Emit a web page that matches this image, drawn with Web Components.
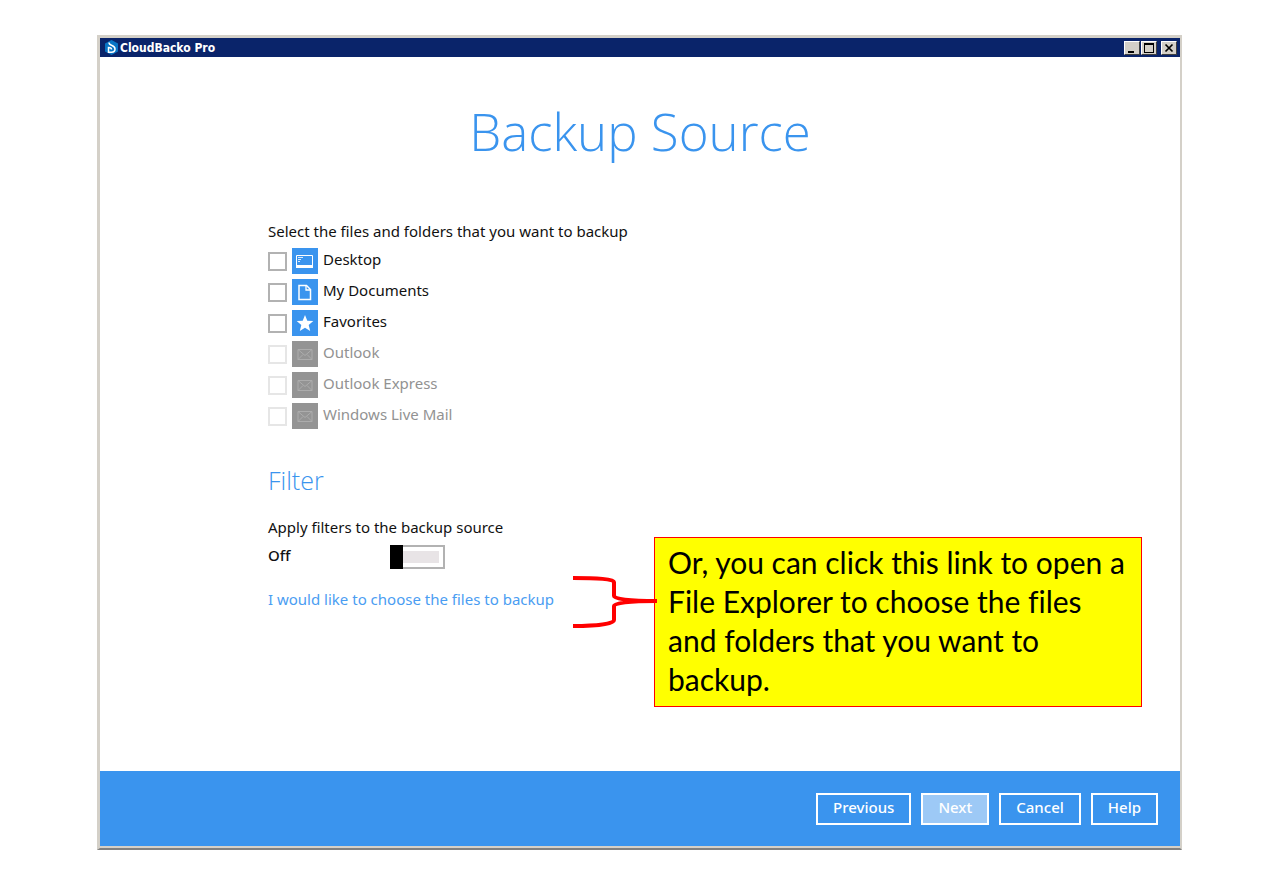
<!DOCTYPE html>
<html lang="en">
<head>
<meta charset="utf-8">
<title>CloudBacko Pro</title>
<style>
body{margin:0;background:#fff;color:#111;font:15px/20px "Noto Sans","Open Sans",sans-serif}
</style>
</head>
<body>
<backup-app></backup-app>
<script>
const define=(name,html,init)=>{
  const t=document.createElement('template');
  t.innerHTML=html;
  customElements.define(name,class extends HTMLElement{
    connectedCallback(){
      if(this.shadowRoot)return;
      const r=this.attachShadow({mode:'open'});
      r.append(t.content.cloneNode(true));
      if(init)init(this,r);
    }
  });
};

const icons={
  desktop:'<path d="M4.500 7.500h16v12h-16z" fill="none" stroke="#fff"/><path d="M4 17h17v3H4z" fill="#fff"/><path d="M6 9.500h5M6 11.500h3M6 13.500h2" stroke="#fff" stroke-opacity=".8"/>',
  document:'<path d="M7 6.500h7.500l4 4v10H7z" fill="none" stroke="#fff" stroke-width="1.500"/><path d="M14 6.500v4.500h4.500" fill="none" stroke="#fff" stroke-width="1.300"/>',
  star:'<path d="M13 5l2.300 5.700 6 .4-4.600 3.900 1.500 6-5.200-3.300L7.800 21l1.500-6L4.700 11.100l6-.4z" fill="#fff"/>',
  mail:'<g fill="none" stroke="#acacac"><path d="M6 8.500h14v10H6z"/><path d="M6 8.500l7 6 7-6M6 18.500l5-5M20 18.500l-5-5"/></g>'
};

define('title-bar',`<style>
:host{display:flex;align-items:center;height:19px;background:#0a246a;color:#fff;padding:0 3px 0 4px}
.logo{width:15px;height:15px;margin-right:1px}
h1{margin:0;flex:1;font:bold 12px/18px "DejaVu Sans Condensed","DejaVu Sans",sans-serif}
button{width:16px;height:14px;padding:0;border:1px solid;border-color:#fff #404040 #404040 #fff;background:#d4d0c8;margin-left:2px;display:block}
button:first-of-type{margin:0}
button:nth-of-type(2){margin:0 2px 0 1px}
svg{display:block}
</style>
<svg class="logo" viewBox="0 0 15 15"><path d="M7.500 0l6.500 3.500v8L7.500 15 1 11.500v-8z" fill="#0874c4"/><path d="M5 2.500c0 2 1.500 2.500 3 3 2 .7 3 1.800 3 3.500 0 2-1.500 3.200-3.500 3.200H4.500V7.500c2 0 3 .8 3 2" fill="none" stroke="#fff" stroke-width="1.500"/></svg>
<h1><slot></slot></h1>
<button aria-label="Minimize"><svg width="14" height="12"><path d="M3 9h6v2H3z"/></svg></button>
<button aria-label="Maximize"><svg width="14" height="12"><path d="M2 1h10v10H2zM3 3v7h8V3z" fill-rule="evenodd"/></svg></button>
<button aria-label="Close"><svg width="14" height="12"><path d="M3.500 2.500l7 7M10.500 2.500l-7 7" stroke="#000" stroke-width="1.700"/></svg></button>`);

define('source-item',`<style>
:host{display:block}
label{display:flex;align-items:center;height:26px}
input{appearance:none;width:19px;height:19px;margin:0 5px 0 0;border:2px solid #b2b2b2;background:#fff}
.icon{width:26px;height:26px;background:#3a94ee;margin-right:5px}
.text{line-height:20px;padding-bottom:4px}
:host([disabled]) input{border-color:#e6e6e6}
:host([disabled]) .icon{background:#949494}
:host([disabled]) .text{color:#929292}
</style>
<label><input type="checkbox"><svg class="icon" viewBox="0 0 26 26" aria-hidden="true"></svg><span class="text"><slot></slot></span></label>`,(el,r)=>{
  r.querySelector('svg').innerHTML=icons[el.getAttribute('icon')];
  r.querySelector('input').disabled=el.hasAttribute('disabled');
});

define('filter-switch',`<style>
:host{display:flex;align-items:center;height:24px}
label{width:122px;font-weight:500;padding-bottom:4px}
input{appearance:none;box-sizing:border-box;width:55px;height:24px;margin:0;border:2px solid #b2b2b2;border-left-width:0;padding:4px 4px 4px 13px;background:#e8e4e6 content-box}
.track{position:relative;display:flex}
.track::before{content:"";position:absolute;left:0;top:0;width:13px;height:24px;background:#000;pointer-events:none}
</style>
<label for="s"><slot></slot></label><span class="track"><input id="s" type="checkbox" role="switch"></span>`);

define('note-callout',`<style>
:host{display:flex;align-items:flex-start}
svg{width:84px;height:54px;margin:38px -3px 0 0;position:relative;flex:none}
p{box-sizing:border-box;width:488px;margin:0;padding:5px 16px 7px 13px;border:1px solid #f00;background:#ff0;color:#000;font:30px/39px Lato,sans-serif;font-variant-ligatures:none}
</style>
<svg viewBox="0 0 84 54" fill="none" stroke="#f00" stroke-width="4" aria-hidden="true"><path d="M0 3C24 3 41 4 41 7V21C41 24 56 26 84 26C56 26 41 28 41 31V45C41 49 24 51 0 51"/></svg>
<p><slot></slot></p>`);

define('nav-button',`<style>
:host{display:block}
button{display:block;height:32px;padding:0 15px 4px;border:2px solid #fff;background:transparent;color:#fff;font:inherit;font-weight:500}
button:disabled{background:#9dc9f6}
</style><button type="button"><slot></slot></button>`,(el,r)=>{
  r.querySelector('button').disabled=el.hasAttribute('disabled');
});

define('backup-app',`<style>
:host{display:flex;flex-direction:column;box-sizing:border-box;min-height:100vh;padding:35px 86px 38px 97px}
.window{flex:1;display:flex;flex-direction:column;border:3px solid #d4d0c8;border-right-width:2px;border-bottom:2px solid #808080}
main{flex:1;padding:0 168px 40px}
h2{margin:42px 0 58px;text-align:center;font:300 51px/64px "Open Sans",sans-serif;color:#3a94ee}
p{margin:0}
.list{display:grid;gap:5px;margin-top:7px}
h3{margin:35px 0 21px;font:300 25px/32px "Open Sans",sans-serif;color:#3a94ee}
filter-switch{margin-top:8px}
.choose{position:relative;margin-top:20px}
a{color:#4a9df2;text-decoration:none}
note-callout{position:absolute;left:305px;top:-52px}
footer{display:flex;justify-content:flex-end;gap:10px;padding:22px 22px 21px;background:#3a94ee;border-bottom:2px solid #d4d0c8}
</style>
<div class="window">
<title-bar>CloudBacko Pro</title-bar>
<main>
<h2>Backup Source</h2>
<p>Select the files and folders that you want to backup</p>
<div class="list">
<source-item icon="desktop">Desktop</source-item>
<source-item icon="document">My Documents</source-item>
<source-item icon="star">Favorites</source-item>
<source-item icon="mail" disabled>Outlook</source-item>
<source-item icon="mail" disabled>Outlook Express</source-item>
<source-item icon="mail" disabled>Windows Live Mail</source-item>
</div>
<h3>Filter</h3>
<p>Apply filters to the backup source</p>
<filter-switch>Off</filter-switch>
<div class="choose"><a href="#">I would like to choose the files to backup</a>
<note-callout>Or, you can click this link to open a File Explorer to choose the files and folders that you want to backup.</note-callout></div>
</main>
<footer><nav-button>Previous</nav-button><nav-button disabled>Next</nav-button><nav-button>Cancel</nav-button><nav-button>Help</nav-button></footer>
</div>`);
</script>
</body>
</html>
